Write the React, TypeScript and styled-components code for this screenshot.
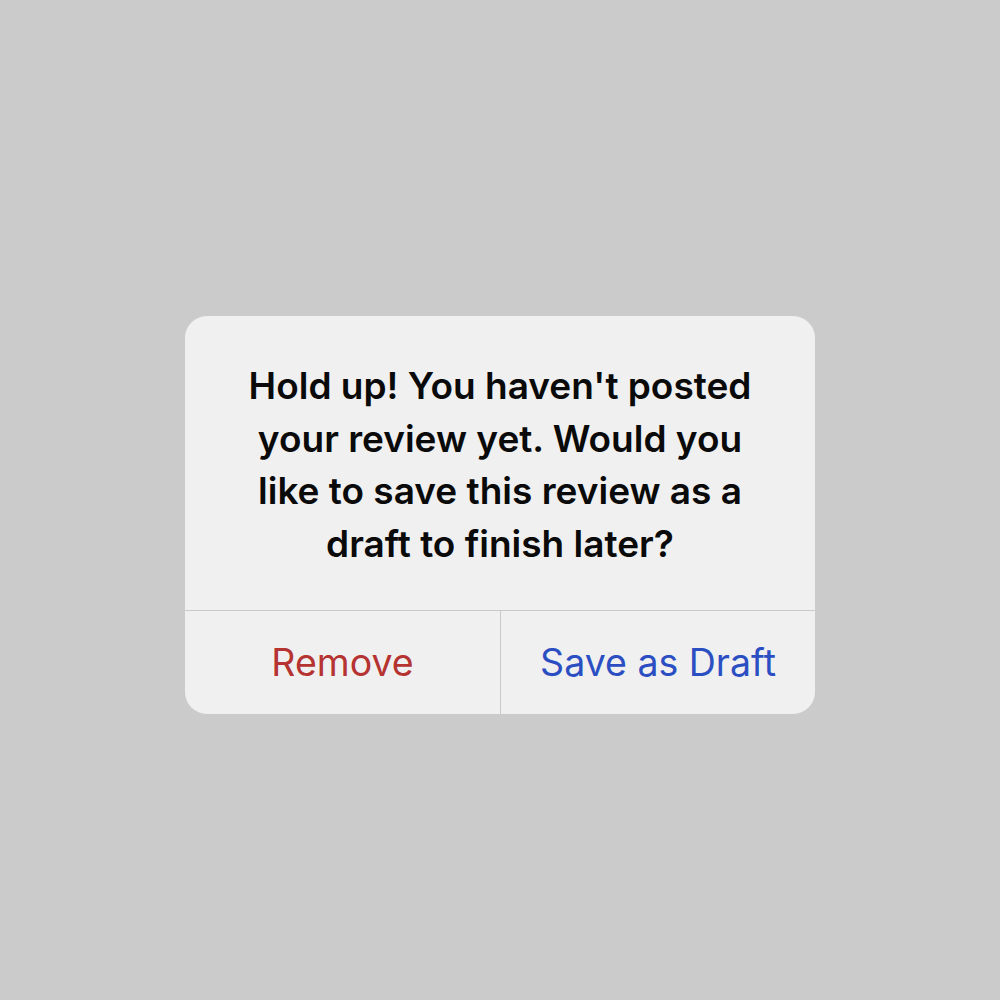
import React from 'react';
import styled, { createGlobalStyle } from 'styled-components';

const GlobalStyle = createGlobalStyle`
  html, body {
    margin: 0;
    padding: 0;
    background: #cbcbcb;
  }
  body {
    font-family: Inter, "Liberation Sans", sans-serif;
  }
`;

const Page = styled.div`
  width: 1000px;
  height: 1000px;
  display: flex;
  align-items: center;
  justify-content: center;
  padding-top: 30px;
  box-sizing: border-box;
`;

const Alert = styled.div`
  width: 630px;
  background: #f0f0f0;
  border-radius: 22px;
  overflow: hidden;
  display: flex;
  flex-direction: column;
`;

const Message = styled.p`
  margin: 0;
  padding: 44px 58px 40px;
  text-align: center;
  font-size: 37px;
  font-weight: 600;
  line-height: 52.5px;
  color: #0a0a0a;
`;

const Actions = styled.div`
  display: grid;
  grid-template-columns: 1fr 1fr;
  border-top: 1px solid #c9c9c9;
  height: 103px;
`;

const ActionButton = styled.button<{ $tone: 'danger' | 'primary' }>`
  border: none;
  background: transparent;
  font-family: inherit;
  font-size: 37.5px;
  font-weight: 400;
  color: ${(p) => (p.$tone === 'danger' ? '#b53330' : '#2b4fc2')};
  cursor: pointer;
  padding: 0;

  & + & {
    border-left: 1px solid #c9c9c9;
  }
`;

export default function App() {
  return (
    <>
      <GlobalStyle />
      <Page>
        <Alert>
          <Message>
            Hold up! You haven't posted your review yet. Would you like to save this review as a draft
            to finish later?
          </Message>
          <Actions>
            <ActionButton $tone="danger">Remove</ActionButton>
            <ActionButton $tone="primary">Save as Draft</ActionButton>
          </Actions>
        </Alert>
      </Page>
    </>
  );
}
